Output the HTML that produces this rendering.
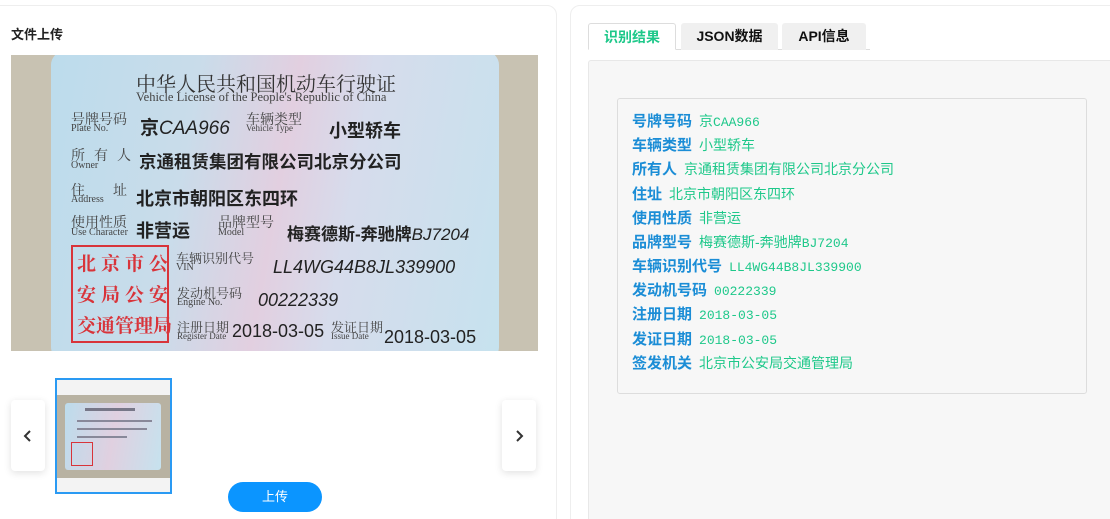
<!DOCTYPE html>
<html><head><meta charset="utf-8">
<style>
*{margin:0;padding:0;box-sizing:border-box}
html{height:519px;overflow:hidden}
body{width:1110px;height:519px;background:#fff;font-family:"Liberation Sans","Noto Sans CJK SC",sans-serif;position:relative;overflow:hidden}
.a{position:absolute;white-space:nowrap}
.lp{position:absolute;left:-10px;top:5px;width:567px;height:530px;border:1px solid #eee;border-radius:10px}
.rp{position:absolute;left:570px;top:5px;width:560px;height:530px;border:1px solid #eee;border-radius:10px}
.img{position:absolute;left:11px;top:55px;width:527px;height:296px;background:#c8c2b2;overflow:hidden}
.card{position:absolute;left:40px;top:-4px;width:448px;height:310px;border-radius:14px;background:linear-gradient(100deg,#bcdcec 0%,#c9dcea 30%,#e2cfe0 50%,#d6dcec 65%,#c6e2ee 100%);}
.s{font-family:"Liberation Serif","Noto Serif CJK SC",serif;color:#444}
.b{font-family:"Liberation Sans","Noto Sans CJK SC",sans-serif;font-weight:bold;color:#222}
.red{color:#d8343a;font-weight:bold;font-size:19px;letter-spacing:5px;font-family:"Noto Serif CJK SC",serif}
.tab{position:absolute;top:23px;height:27px;font-size:14px;font-weight:bold;text-align:center;line-height:27px;border-radius:3px 3px 0 0}
.row{position:absolute;left:632px;font-size:14px;line-height:20px;white-space:nowrap}
.row b{color:#1b8dd6;font-size:15px;margin-right:7px}
.row span{color:#1ec88a}
.row i{font-style:normal;font-family:"Liberation Mono",monospace;font-size:13px;color:#1ec88a}
.nav{position:absolute;top:400px;width:34px;height:71px;background:#fff;border-radius:4px;box-shadow:0 2px 8px rgba(0,0,0,.12)}
.nav svg{position:absolute;left:12px;top:30px}
</style></head><body>
<div class="lp"></div>
<div class="rp"></div>
<div class="a" style="left:11px;top:24px;font-size:13px;font-weight:bold;color:#222">文件上传</div>

<div class="img">
 <div class="card"></div>
 <div class="a s" style="left:125px;top:13px;font-size:20px;color:#333">中华人民共和国机动车行驶证</div>
 <div class="a s" style="left:125px;top:35px;font-size:12.5px">Vehicle License of the People's Republic of China</div>
 <div class="a s" style="left:60px;top:54px;font-size:14px">号牌号码</div>
 <div class="a s" style="left:60px;top:68px;font-size:10px">Plate No.</div>
 <div class="a b" style="left:129px;top:58px;font-size:19px">京<i style="font-weight:normal">CAA966</i></div>
 <div class="a s" style="left:235px;top:54px;font-size:14px">车辆类型</div>
 <div class="a s" style="left:235px;top:68px;font-size:9px">Vehicle Type</div>
 <div class="a b" style="left:318px;top:62px;font-size:18px">小型轿车</div>
 <div class="a s" style="left:60px;top:90px;font-size:14px;letter-spacing:9px">所有人</div>
 <div class="a s" style="left:60px;top:105px;font-size:10px">Owner</div>
 <div class="a b" style="left:128px;top:94px;font-size:17.5px">京通租赁集团有限公司北京分公司</div>
 <div class="a s" style="left:60px;top:125px;font-size:14px;letter-spacing:28px">住址</div>
 <div class="a s" style="left:60px;top:139px;font-size:10px">Address</div>
 <div class="a b" style="left:125px;top:130px;font-size:18px">北京市朝阳区东四环</div>
 <div class="a s" style="left:60px;top:157px;font-size:14px">使用性质</div>
 <div class="a s" style="left:60px;top:172px;font-size:10px">Use Character</div>
 <div class="a b" style="left:125px;top:162px;font-size:18px">非营运</div>
 <div class="a s" style="left:207px;top:157px;font-size:14px">品牌型号</div>
 <div class="a s" style="left:207px;top:172px;font-size:10px">Model</div>
 <div class="a b" style="left:276px;top:165px;font-size:17px">梅赛德斯-奔驰牌<span style="font-weight:normal;font-style:italic">BJ7204</span></div>
 <div class="a" style="left:60px;top:190px;width:98px;height:98px;border:2px solid #d8343a"></div>
 <div class="a red" style="left:66px;top:194px">北京市公</div>
 <div class="a red" style="left:66px;top:225px">安局公安</div>
 <div class="a red" style="left:66px;top:256px;letter-spacing:0">交通管理局</div>
 <div class="a s" style="left:165px;top:193px;font-size:13px">车辆识别代号</div>
 <div class="a s" style="left:165px;top:207px;font-size:10px">VIN</div>
 <div class="a" style="left:262px;top:202px;font-size:18px;font-style:italic;color:#222">LL4WG44B8JL339900</div>
 <div class="a s" style="left:166px;top:228px;font-size:13px">发动机号码</div>
 <div class="a s" style="left:166px;top:242px;font-size:10px">Engine No.</div>
 <div class="a" style="left:247px;top:235px;font-size:18px;font-style:italic;color:#222">00222339</div>
 <div class="a s" style="left:166px;top:262px;font-size:13px">注册日期</div>
 <div class="a s" style="left:166px;top:276px;font-size:9px">Register Date</div>
 <div class="a" style="left:221px;top:266px;font-size:18px;color:#222">2018-03-05</div>
 <div class="a s" style="left:320px;top:262px;font-size:13px">发证日期</div>
 <div class="a s" style="left:320px;top:276px;font-size:9px">Issue Date</div>
 <div class="a" style="left:373px;top:272px;font-size:18px;color:#222">2018-03-05</div>
</div>

<div class="nav" style="left:11px"><svg width="10" height="12" viewBox="0 0 10 12"><path d="M7 1L2 6l5 5" fill="none" stroke="#333" stroke-width="2"/></svg></div>
<div class="nav" style="left:502px"><svg width="10" height="12" viewBox="0 0 10 12"><path d="M3 1l5 5-5 5" fill="none" stroke="#333" stroke-width="2"/></svg></div>
<div class="a" style="left:55px;top:378px;width:117px;height:116px;border:2px solid #2a9af3;background:#f3f3f3;overflow:hidden">
 <div class="a" style="left:0;top:15px;width:113px;height:83px;background:#b8b2a2"></div>
 <div class="a" style="left:8px;top:23px;width:96px;height:67px;background:linear-gradient(100deg,#bcdcec,#e0d0e0,#c6e2ee);border-radius:3px"></div>
 <div class="a" style="left:28px;top:28px;width:50px;height:3px;background:#778"></div>
 <div class="a" style="left:20px;top:40px;width:75px;height:2px;background:#889"></div>
 <div class="a" style="left:20px;top:48px;width:70px;height:2px;background:#889"></div>
 <div class="a" style="left:20px;top:56px;width:50px;height:2px;background:#889"></div>
 <div class="a" style="left:14px;top:62px;width:22px;height:24px;border:1px solid #d8343a"></div>
</div>
<div class="a" style="left:228px;top:482px;width:94px;height:30px;background:#0b95ff;border-radius:15px;color:#fff;font-size:13px;text-align:center;line-height:30px">上传</div>

<div class="a" style="left:588px;top:49px;width:282px;height:1px;background:#ddd"></div>
<div class="tab" style="left:588px;width:88px;background:#fff;border:1px solid #ddd;border-bottom:1px solid #fff;color:#1ec88a">识别结果</div>
<div class="tab" style="left:681px;width:97px;background:#f0f0f0;color:#111">JSON数据</div>
<div class="tab" style="left:782px;width:84px;background:#f0f0f0;color:#111">API信息</div>
<div class="a" style="left:588px;top:60px;width:530px;height:470px;background:#f7f7f7;border:1px solid #e8e8e8;border-radius:3px"></div>
<div class="a" style="left:617px;top:98px;width:470px;height:296px;border:1px solid #ddd;border-radius:3px;background:#f7f7f7"></div>

<div class="row" style="top:111px"><b>号牌号码</b><span>京</span><i>CAA966</i></div>
<div class="row" style="top:135px"><b>车辆类型</b><span>小型轿车</span></div>
<div class="row" style="top:159px"><b>所有人</b><span>京通租赁集团有限公司北京分公司</span></div>
<div class="row" style="top:184px"><b>住址</b><span>北京市朝阳区东四环</span></div>
<div class="row" style="top:208px"><b>使用性质</b><span>非营运</span></div>
<div class="row" style="top:232px"><b>品牌型号</b><span>梅赛德斯-奔驰牌</span><i>BJ7204</i></div>
<div class="row" style="top:256px"><b>车辆识别代号</b><i>LL4WG44B8JL339900</i></div>
<div class="row" style="top:280px"><b>发动机号码</b><i>00222339</i></div>
<div class="row" style="top:304px"><b>注册日期</b><i>2018-03-05</i></div>
<div class="row" style="top:329px"><b>发证日期</b><i>2018-03-05</i></div>
<div class="row" style="top:353px"><b>签发机关</b><span>北京市公安局交通管理局</span></div>
</body></html>
